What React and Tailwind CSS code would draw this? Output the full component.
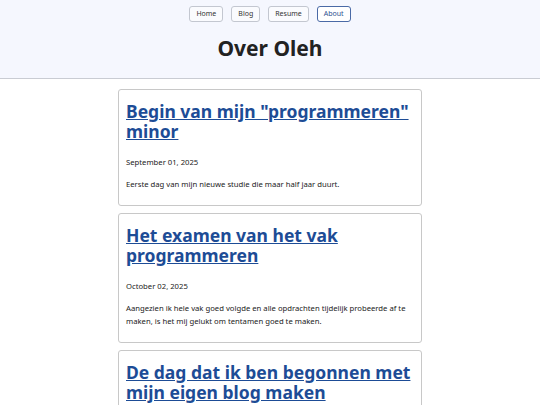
import React from 'react';

const navItems = ['Home', 'Blog', 'Resume', 'About'];

const posts = [
  {
    title: 'Begin van mijn "programmeren" minor',
    date: 'September 01, 2025',
    text: 'Eerste dag van mijn nieuwe studie die maar half jaar duurt.',
  },
  {
    title: 'Het examen van het vak programmeren',
    date: 'October 02, 2025',
    text: 'Aangezien ik hele vak goed volgde en alle opdrachten tijdelijk probeerde af te maken, is het mij gelukt om tentamen goed te maken.',
  },
  {
    title: 'De dag dat ik ben begonnen met mijn eigen blog maken',
    date: 'October 10, 2025',
    text: 'Vandaag ben ik begonnen met het bouwen van mijn eigen blog.',
  },
];

const App = () => {
  return (
    <div className="min-h-screen bg-white font-['Noto_Sans',sans-serif] text-[#222]">
      {/* header */}
      <header className="bg-[#f5f7fe] border-b border-[#c9ccd3] pt-[6px] pb-[16px]">
        <nav className="flex justify-center gap-[8px]">
          {navItems.map((item) => (
            <a
              key={item}
              href="#"
              className={
                item === 'About'
                  ? 'h-[16px] px-[6px] flex items-center rounded-[3px] border border-[#4a6aa6] text-[#2d4f8f] text-[7px] bg-white'
                  : 'h-[16px] px-[6px] flex items-center rounded-[3px] border border-[#c3c7d0] text-[#333] text-[7px] bg-[#fafbfe]'
              }
            >
              {item}
            </a>
          ))}
        </nav>
        <h1 className="mt-[12px] text-center text-[21px] leading-[28px] font-bold text-[#222]">Over Oleh</h1>
      </header>

      {/* posts */}
      <main className="w-[304px] mx-auto pt-[10px] pb-4 flex flex-col gap-[7px]">
        {posts.map((post) => (
          <article key={post.title} className="border border-[#c8c8c8] rounded-[3px] px-[7px] pt-[11px] pb-[14px]">
            <h2 className="text-[17.5px] leading-[20px] font-bold">
              <a href="#" className="text-[#1d4c96] underline">{post.title}</a>
            </h2>
            <p className="mt-[15px] text-[7.7px] leading-[12px] text-[#222]">{post.date}</p>
            <p className="mt-[10px] text-[7.7px] leading-[13px] text-[#222]">{post.text}</p>
          </article>
        ))}
      </main>
    </div>
  );
};

export default App;
